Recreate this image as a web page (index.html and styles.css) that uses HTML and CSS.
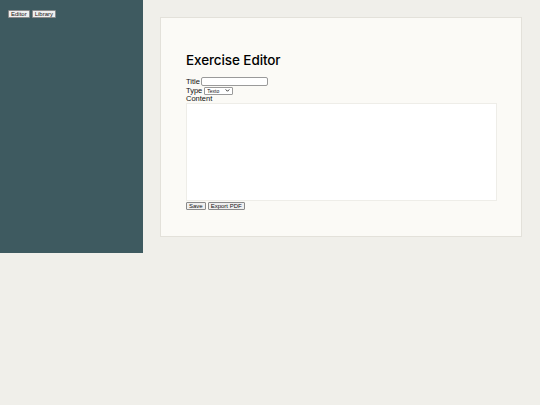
FILE: index.html
```html
<!DOCTYPE html>
<html>
<head>
<meta charset="utf-8">
<link rel="stylesheet" href="styles.css">
</head>
<body>
<div class="app">
  <aside class="sidebar">
    <div class="nav">
      <button class="btn">Editor</button>
      <button class="btn">Library</button>
    </div>
  </aside>
  <main class="main">
    <section class="card">
      <h1 class="title">Exercise Editor</h1>
      <div class="row"><label>Title</label><input class="text-input" type="text"></div>
      <div class="row"><label>Type</label>
        <span class="select-wrap">
          <select class="select"><option>Texto</option></select>
          <svg class="chev" viewBox="0 0 6 4" width="5" height="3"><path d="M0.6 0.6 L3 3 L5.4 0.6" fill="none" stroke="#222" stroke-width="1.2"/></svg>
        </span>
      </div>
      <div class="row row-short"><label>Content</label></div>
      <textarea class="content"></textarea>
      <div class="actions">
        <button class="btn">Save</button>
        <button class="btn">Export PDF</button>
      </div>
    </section>
  </main>
</div>
</body>
</html>
```

FILE: styles.css
```css
html, body {
  margin: 0;
  padding: 0;
  background: #f0efea;
  font-family: "Liberation Sans", Arial, sans-serif;
  font-size: 7.5px;
  color: #111;
}
.app {
  display: flex;
  align-items: flex-start;
}
.sidebar {
  width: 143px;
  height: 253px;
  background: #3e5a60;
  flex: none;
  box-sizing: border-box;
  padding: 10px 8px;
}
.nav {
  display: flex;
  gap: 2px;
}
.btn {
  font-family: "Liberation Sans", Arial, sans-serif;
  font-size: 6px;
  line-height: 6px;
  padding: 0 2px;
  margin: 0;
  background: #efefef;
  border: 1px solid #8a8a8a;
  border-radius: 1px;
  color: #111;
}
.main {
  flex: 1;
  padding: 17px 18px 0 17px;
}
.card {
  background: #fbfaf6;
  border: 1px solid #e3e1da;
  padding: 25px 24px 25px 25px;
  height: 168px;
}
.title {
  font-family: Inter, "Liberation Sans", sans-serif;
  font-size: 13.5px;
  font-weight: 500;
  margin: 8px 0 7px 0;
  line-height: 19px;
  letter-spacing: -0.1px;
  color: #000;
}
.row {
  display: flex;
  align-items: center;
  line-height: 9px;
  height: 9px;
}
.row-short {
  height: 8px;
  line-height: 8px;
}
.text-input {
  width: 67px;
  height: 9px;
  box-sizing: border-box;
  border: 1px solid #9a9a9a;
  border-radius: 2px;
  padding: 0;
  margin: 0 0 0 1px;
  background: #fff;
}
.select-wrap {
  position: relative;
  display: inline-flex;
  margin-left: 2px;
}
.select {
  -webkit-appearance: none;
  appearance: none;
  width: 29px;
  height: 8px;
  font-family: "Liberation Sans", Arial, sans-serif;
  font-size: 5px;
  line-height: 6px;
  padding: 0 0 0 2px;
  margin: 0;
  border: 1px solid #9a9a9a;
  border-radius: 1px;
  background: #fff;
  color: #111;
  box-sizing: border-box;
}
.chev {
  position: absolute;
  right: 3px;
  top: 2.5px;
}
.content {
  display: block;
  width: 311px;
  height: 98px;
  box-sizing: border-box;
  border: 1px solid #eeede8;
  background: #fff;
  margin: 0;
  padding: 0;
  resize: none;
}
.actions {
  display: flex;
  gap: 2px;
  margin-top: 1px;
}
```
